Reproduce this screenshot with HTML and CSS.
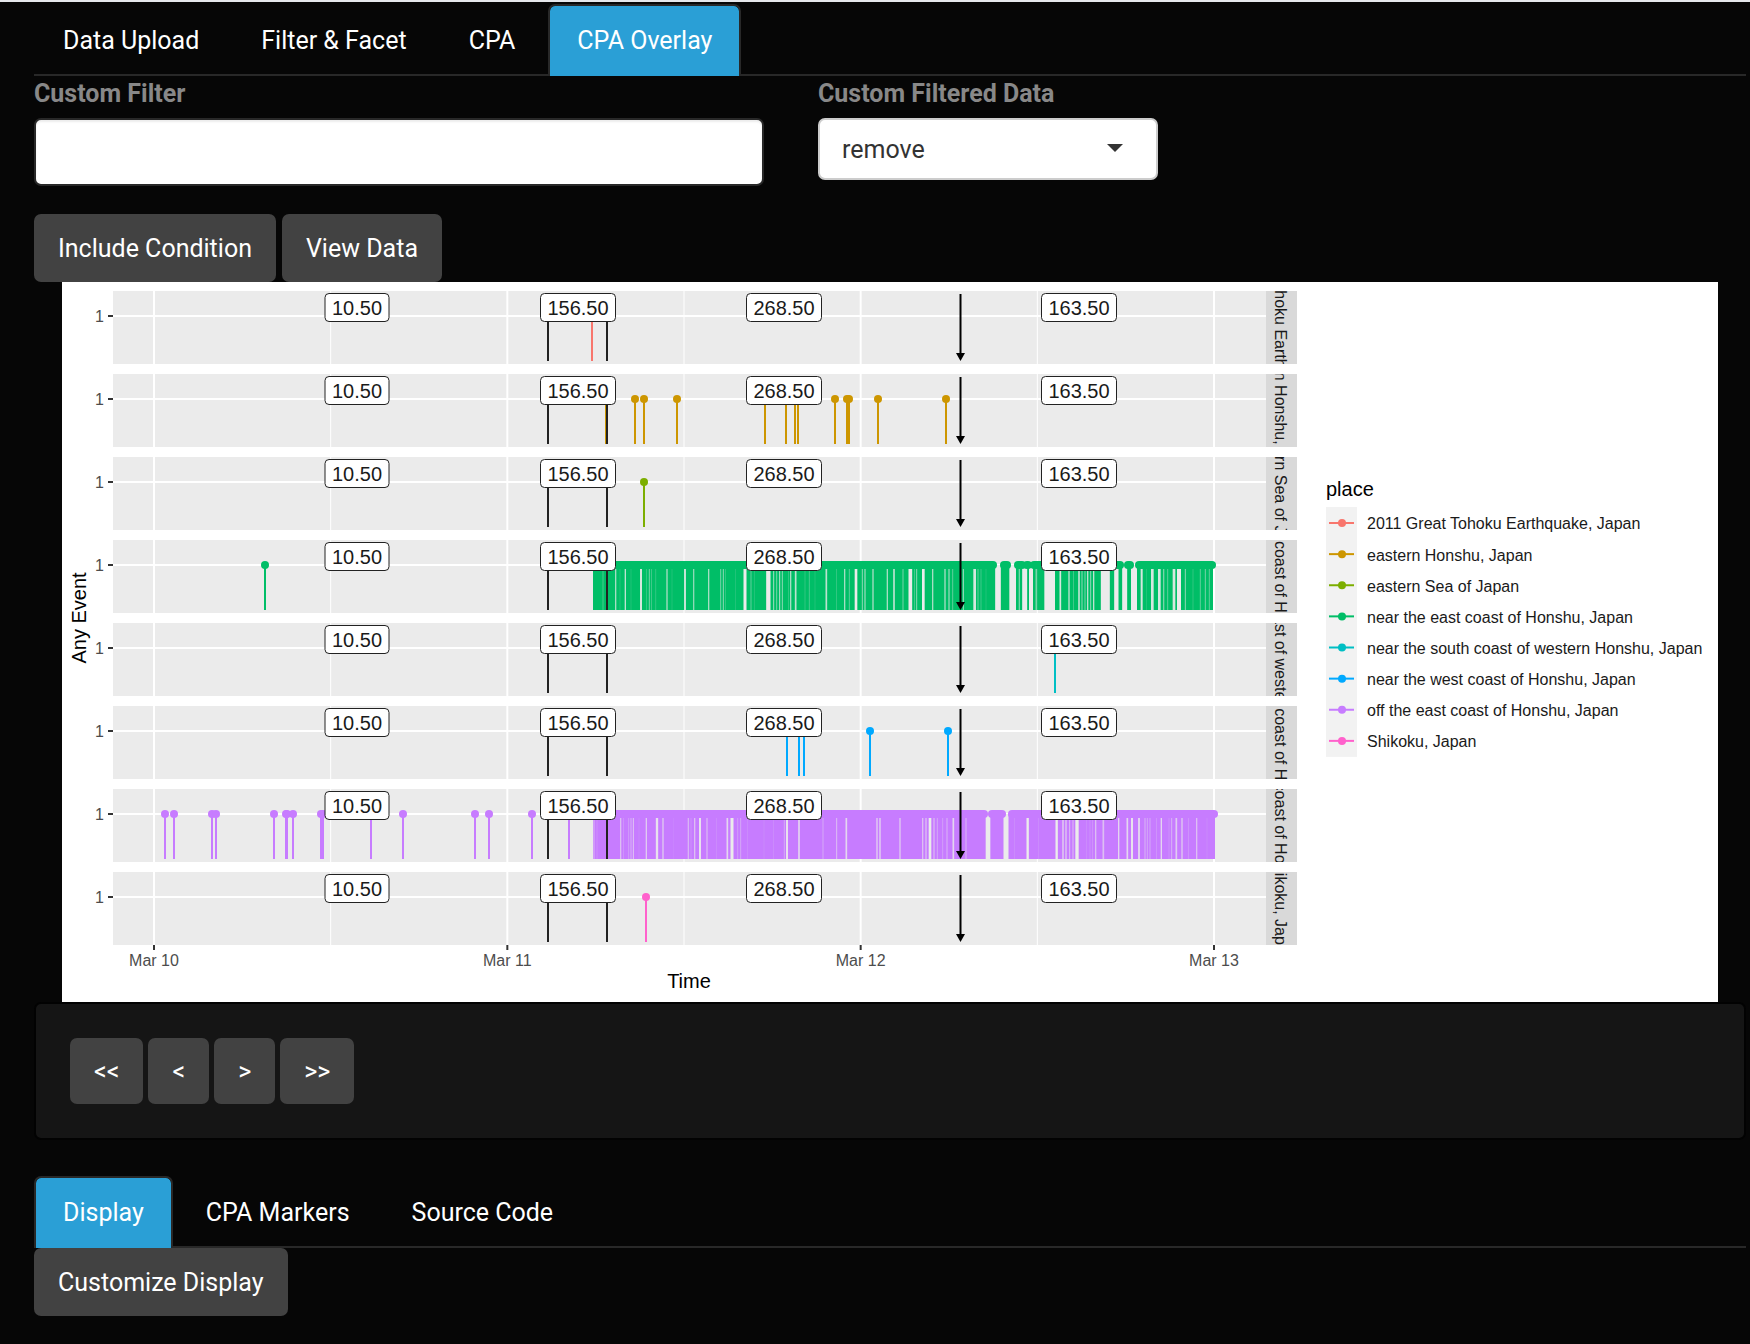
FILE: index.html
```html
<!DOCTYPE html>
<html lang="en">
<head>
<meta charset="utf-8">
<title>CPA Overlay</title>
<link rel="stylesheet" href="styles.css">
</head>
<body>
<main class="page">
  <nav class="tabs" aria-label="Sections">
    <a class="tab" href="#upload">Data Upload</a>
    <a class="tab" href="#facet">Filter &amp; Facet</a>
    <a class="tab" href="#cpa">CPA</a>
    <a class="tab active" href="#overlay" aria-current="page">CPA Overlay</a>
  </nav>

  <form class="filters">
    <div class="field">
      <label for="custom-filter">Custom Filter</label>
      <input id="custom-filter" class="text-input" type="text">
    </div>
    <div class="field">
      <label for="filtered-data">Custom Filtered Data</label>
      <div class="select-wrap">
        <select id="filtered-data" class="select">
          <option>remove</option>
          <option>keep</option>
        </select>
      </div>
    </div>
  </form>

  <div class="actions">
    <button class="btn" type="button">Include Condition</button>
    <button class="btn" type="button">View Data</button>
  </div>

  <div class="plot">
    <svg id="chart" class="chart" viewBox="62 282 1656 720" role="img" aria-label="Any Event over Time by place"></svg>
  </div>

  <div class="well">
    <button class="btn" type="button">&lt;&lt;</button>
    <button class="btn" type="button">&lt;</button>
    <button class="btn" type="button">&gt;</button>
    <button class="btn" type="button">&gt;&gt;</button>
  </div>

  <nav class="tabs" aria-label="Display options">
    <a class="tab active" href="#display" aria-current="page">Display</a>
    <a class="tab" href="#markers">CPA Markers</a>
    <a class="tab" href="#source">Source Code</a>
  </nav>
  <button class="btn" type="button">Customize Display</button>
</main>
<script src="chart.js"></script>
</body>
</html>
```
FILE: styles.css
```css
* {
  box-sizing: border-box;
}

body {
  margin: 0;
  background: #060606;
  border-top: 2px solid #e5e7eb;
  color: #fff;
  font: 25px/36px Roboto, sans-serif;
}

.page {
  padding: 2px 4px 28px 34px;
}

.tabs {
  display: flex;
  gap: 4px;
  border-bottom: 2px solid #282828;
}

.tab {
  margin-bottom: -2px;
  padding: 17px 27px;
  border: 2px solid transparent;
  border-bottom: 0;
  border-radius: 7px 7px 0 0;
  color: #fff;
  text-decoration: none;
}

.tab.active {
  background: #2a9fd6;
  background-clip: padding-box;
  border-color: #282828;
}

.filters {
  display: grid;
  grid-template-columns: 730fr 928fr;
  gap: 54px;
  margin-bottom: 28px;
}

.field label {
  display: block;
  margin-bottom: 6px;
  color: #888;
  font-weight: 700;
}

.text-input {
  display: block;
  width: 100%;
  height: 68px;
  padding: 14px 22px;
  border: 2px solid #282828;
  border-radius: 7px;
  background: #fff;
  box-shadow: inset 0 2px 2px rgba(0, 0, 0, 0.075);
  color: #333;
  font: inherit;
}

.select-wrap {
  position: relative;
  width: 340px;
}

.select-wrap::after {
  content: "";
  position: absolute;
  top: 26px;
  right: 35px;
  border: 8px solid transparent;
  border-top-color: #333;
  border-bottom: 0;
  pointer-events: none;
}

.select {
  display: block;
  width: 100%;
  height: 62px;
  padding: 2px 22px 0;
  appearance: none;
  border: 2px solid #ccc;
  border-radius: 7px;
  background: #fff;
  color: #333;
  font: inherit;
}

.actions {
  display: flex;
  gap: 6px;
}

.btn {
  padding: 17px 24px 15px;
  border: 0;
  border-radius: 7px;
  background: #424242;
  color: #fff;
  font: inherit;
}

.plot {
  padding: 0 28px;
}

.chart {
  display: block;
  width: 100%;
  background: #fff;
  font-family: "Liberation Sans", Arial, sans-serif;
  font-size: 16px;
}

.well {
  display: flex;
  gap: 5px;
  margin-bottom: 36px;
  padding: 34px;
  border: 2px solid #020202;
  border-radius: 7px;
  background: #151515;
}

.well .btn {
  padding: 16px 24px 14px;
}

.panel {
  fill: #ebebeb;
}

.strip {
  fill: #d9d9d9;
}

.strip-text {
  fill: #1a1a1a;
}

.grid-major {
  stroke: #fff;
  stroke-width: 2;
}

.grid-minor {
  stroke: #fff;
  stroke-width: 1;
}

.tick {
  stroke: #333;
  stroke-width: 2;
}

.tick-text {
  fill: #4d4d4d;
}

.title {
  fill: #000;
  font-size: 20px;
}

.value {
  fill: #1a1a1a;
  font-size: 20px;
}

.stem {
  stroke-width: 2;
}

.marker {
  stroke: #222;
  stroke-width: 2;
}

.arrow {
  stroke: #000;
  stroke-width: 2;
}

.value-box {
  fill: #fff;
  stroke: #222;
  stroke-width: 1;
}

.key {
  fill: #f2f2f2;
}

.middle {
  text-anchor: middle;
}

.end {
  text-anchor: end;
}
```
FILE: chart.js
```js
const chart = document.getElementById("chart");
const PANEL = { left: 113, right: 1266, top: 291, height: 73, pitch: 83 };
const KEYS = { top: 507, pitch: 249 / 8 };
const DAY_0 = 154;
const DAY_WIDTH = 1060 / 3;

// Dense series are one solid band with slits; each slit is [centre, width, opacity],
// counted in thirds of a unit from the band's origin.
const eastSlits = [
  [99,3,.3],[137,4,.7],[150,2,.2],[166,4,.8],[183,2,.2],[213,6,.9],[230,2,.3],[238,3,.5],[244,2,.4],[257,3,.2],
  [291,4,.7],[306,2,.2],[345,5,1],[371,4,.6],[416,4,.7],[452,3,.5],[460,3,.6],[467,2,.3],[496,2,.2],[525,9,1],
  [543,3,.4],[553,2,.2],[595,13,1],[611,3,.7],[620,3,.5],[629,3,.8],[637,3,.6],[655,2,.3],[662,4,.7],[677,5,.8],
  [705,2,.3],[718,3,.3],[735,2,.2],[769,5,.8],[800,2,.3],[824,4,.7],[838,3,.4],[858,8,1],[877,3,.6],[885,4,.6],
  [909,4,.7],[952,4,.7],[972,5,.8],[999,3,.5],[1021,11,1],[1034,2,.4],[1040,3,.6],[1060,8,1],[1088,4,.7],
  [1125,4,.7],[1137,4,.6],[1148,3,.4],[1180,3,.7],[1214,8,.9],[1224,3,.4],[1233,2,.4],[1248,2,.2],[1284,17,1],
  [1328,20,1],[1348,4,.5],[1364,15,1],[1383,12,1],[1399,5,.5],[1439,32,1],[1471,5,.9],[1497,4,.8],[1511,2,.4],
  [1527,5,.8],[1536,3,.6],[1545,3,.5],[1553,4,.8],[1562,3,.6],[1571,4,.8],[1606,27,1],[1639,13,1],[1664,15,1],
  [1692,18,1],[1715,6,.9],[1730,2,.2],[1747,8,.9],[1768,8,.9],[1781,4,.5],[1793,3,.4],[1812,8,.9],[1827,12,1],
  [1846,3,.6],[1869,2,.3],[1891,3,.4],[1906,3,.5],[1918,3,.4]
];
const offSlits = [
  [72,4,.4],[81,2,.3],[152,4,.6],[160,2,.3],[176,3,.3],[183,3,.5],[190,3,.7],[207,2,.2],[229,4,.7],[261,7,.9],
  [279,4,.7],[310,1,.2],[355,4,.5],[363,2,.3],[374,4,.6],[390,6,.9],[411,4,.5],[440,2,.2],[472,5,.8],[486,9,1],
  [503,3,.3],[512,3,.4],[533,2,.2],[582,2,.2],[611,2,.2],[643,3,.4],[651,6,.9],[687,5,.8],[759,3,.4],[800,3,.6],
  [829,5,.8],[921,5,.6],[930,4,.8],[990,4,.7],[1058,4,.6],[1068,4,.6],[1080,8,1],[1092,4,.5],[1102,3,.4],
  [1118,3,.3],[1131,3,.5],[1150,5,.8],[1188,4,.4],[1254,14,1],[1308,15,1],[1333,2,.2],[1373,7,1],[1405,2,.2],
  [1460,7,1],[1479,4,.8],[1488,4,.7],[1499,3,.6],[1509,3,.6],[1521,10,1],[1550,2,.2],[1560,2,.3],[1567,2,.3],
  [1577,4,.6],[1600,5,.6],[1646,4,.8],[1672,5,.8],[1686,6,.9],[1707,5,.9],[1725,3,.5],[1732,3,.4],[1740,3,.4],
  [1760,2,.3],[1774,4,.8],[1797,2,.3],[1805,3,.5],[1819,5,.7],[1836,4,.7],[1856,2,.3],[1880,4,.6],[1911,2,.2]
];

const series = [
  { place: "2011 Great Tohoku Earthquake, Japan", color: "#f8766d", events: [592] },
  { place: "eastern Honshu, Japan", color: "#cd9600",
    events: [606, 635, 644, 677, 765, 786, 795, 798, 835, 847, 849, 878, 946] },
  { place: "eastern Sea of Japan", color: "#7cae00", events: [644] },
  { place: "near the east coast of Honshu, Japan", color: "#00be67", events: [265],
    band: { start: 593, end: 1213, slits: eastSlits,
      runs: [[597, 993], [1004, 1007], [1018, 1022], [1027, 1028], [1034, 1120], [1128, 1130], [1139, 1212]] } },
  { place: "near the south coast of western Honshu, Japan", color: "#00bfc4", events: [1055] },
  { place: "near the west coast of Honshu, Japan", color: "#00a9ff", events: [787, 799, 804, 870, 948] },
  { place: "off the east coast of Honshu, Japan", color: "#c77cff",
    events: [165, 174, 212, 216, 274, 286, 287, 293, 321, 323, 371, 403, 475, 489, 532, 569],
    band: { start: 593, end: 1215, slits: offSlits, runs: [[597, 984], [992, 1002], [1012, 1214]] } },
  { place: "Shikoku, Japan", color: "#ff61cc", events: [646] }
];

const segments = [
  { x: 357, width: 64, value: "10.50" },
  { x: 578, width: 75, value: "156.50" },
  { x: 784, width: 75, value: "268.50" },
  { x: 1079, width: 75, value: "163.50" }
];

function add(parent, name, attrs, text) {
  const node = document.createElementNS("http://www.w3.org/2000/svg", name);
  for (const key in attrs) node.setAttribute(key, attrs[key]);
  if (text) node.textContent = text;
  parent.appendChild(node);
  return node;
}

function line(parent, cls, x1, y1, x2, y2, stroke) {
  const attrs = { class: cls, x1, y1, x2, y2 };
  if (stroke) attrs.stroke = stroke;
  return add(parent, "line", attrs);
}

series.forEach((s, i) => {
  const top = PANEL.top + i * PANEL.pitch;
  const bottom = top + PANEL.height;
  const y = top + 25;
  const base = top + 70;
  const g = add(chart, "g", {});

  add(g, "rect", { class: "panel", x: PANEL.left, y: top, width: PANEL.right - PANEL.left, height: PANEL.height });
  for (let half = 0; half <= 6; half++) {
    const x = DAY_0 + half * DAY_WIDTH / 2;
    line(g, half % 2 ? "grid-minor" : "grid-major", x, top, x, bottom);
  }
  line(g, "grid-major", PANEL.left, y, PANEL.right, y);
  line(g, "tick", 108, y, PANEL.left, y);
  add(g, "text", { class: "tick-text end", x: 104, y: y + 6 }, "1");

  if (s.band) {
    const b = s.band;
    add(g, "rect", { x: b.start, y, width: b.end - b.start, height: base - y, fill: s.color });
    b.slits.forEach(([c, w, opacity]) => {
      add(g, "rect", { class: "panel", x: 570 + (c - w / 2) / 3, y, width: w / 3, height: base - y, opacity });
    });
    b.runs.forEach(([from, to]) => {
      add(g, "line", { x1: from, x2: to, y1: y, y2: y, stroke: s.color, "stroke-width": 8, "stroke-linecap": "round" });
    });
  }
  s.events.forEach(x => {
    line(g, "stem", x, y, x, base, s.color);
    add(g, "circle", { cx: x, cy: y, r: 4, fill: s.color });
  });

  line(g, "marker", 548, top + 3, 548, base);
  line(g, "marker", 607, top + 3, 607, base);
  line(g, "arrow", 960.5, top + 3, 960.5, top + 66);
  add(g, "path", { d: `M956 ${top + 62}h9l-4.5 8z` });

  segments.forEach(m => {
    add(g, "rect", { class: "value-box", x: m.x - m.width / 2, y: top + 2.5, width: m.width, height: 28, rx: 4 });
    add(g, "text", { class: "value middle", x: m.x, y: top + 24 }, m.value);
  });

  const clip = add(g, "clipPath", { id: "strip-" + i });
  add(clip, "rect", { x: PANEL.right, y: top, width: 31, height: PANEL.height });
  const strip = add(g, "g", { "clip-path": `url(#strip-${i})` });
  add(strip, "rect", { class: "strip", x: PANEL.right, y: top, width: 31, height: PANEL.height });
  add(strip, "text", { class: "strip-text middle", transform: `translate(1275 ${top + 36}) rotate(90)` }, s.place);

  // Legend entry
  const keyY = KEYS.top + i * KEYS.pitch;
  add(chart, "rect", { class: "key", x: 1326, y: keyY, width: 31, height: 32 });
  line(chart, "stem", 1329, keyY + 16, 1354, keyY + 16, s.color);
  add(chart, "circle", { cx: 1342, cy: keyY + 16, r: 4, fill: s.color });
  add(chart, "text", { class: "strip-text", x: 1367, y: Math.ceil(keyY + 22) }, s.place);
});

["Mar 10", "Mar 11", "Mar 12", "Mar 13"].forEach((day, i) => {
  const x = DAY_0 + i * DAY_WIDTH;
  line(chart, "tick", x, 945, x, 950);
  add(chart, "text", { class: "tick-text middle", x, y: 966 }, day);
});
add(chart, "text", { class: "title middle", x: 689, y: 988 }, "Time");
add(chart, "text", { class: "title middle", transform: "translate(86 618) rotate(-90)" }, "Any Event");
add(chart, "text", { class: "title", x: 1326, y: 496 }, "place");
```
